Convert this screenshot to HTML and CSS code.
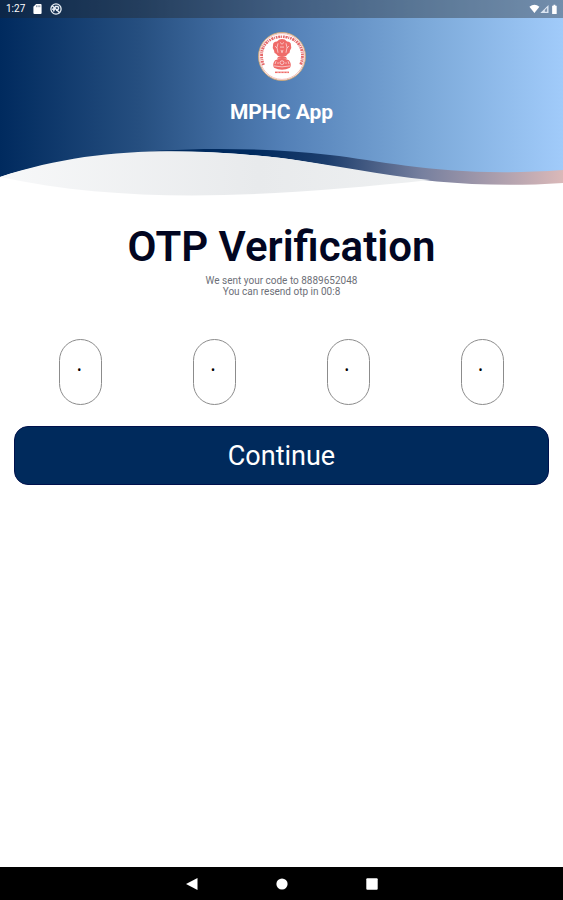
FILE: index.html
```html
<!DOCTYPE html>
<html lang="en">
<head>
<meta charset="utf-8">
<meta name="viewport" content="width=device-width, initial-scale=1">
<title>OTP Verification</title>
<link rel="stylesheet" href="styles.css">
</head>
<body>
<header class="hero">
  <svg class="hero-art" viewBox="0 0 563 200" preserveAspectRatio="none" aria-hidden="true">
    <defs>
      <linearGradient id="sky" x1="0" x2="1" y1="0" y2="0">
        <stop offset="0" stop-color="#002a5e"/>
        <stop offset=".25" stop-color="#264f80"/>
        <stop offset=".5" stop-color="#527fb6"/>
        <stop offset=".75" stop-color="#7ba8d8"/>
        <stop offset="1" stop-color="#a1cbfa"/>
      </linearGradient>
      <linearGradient id="band" gradientUnits="userSpaceOnUse" x1="0" x2="563" y1="0" y2="0">
        <stop offset=".45" stop-color="#002a5e"/>
        <stop offset=".58" stop-color="#1c3d6c"/>
        <stop offset=".75" stop-color="#77809f"/>
        <stop offset="1" stop-color="#dab9b9"/>
      </linearGradient>
      <linearGradient id="mist" x1="0" x2="1" y1="0" y2="0">
        <stop offset="0" stop-color="#f7f8f9"/>
        <stop offset=".6" stop-color="#e8eaec"/>
        <stop offset="1" stop-color="#eef0f1"/>
      </linearGradient>
    </defs>
    <path fill="url(#band)" d="M0 176V130H563V183C430 192 340 165 281 158C180 146 80 151 0 177Z"/>
    <path fill="url(#sky)" d="M0 0H563V170C450 178 390 162 330 155C220 143 100 148 0 176Z"/>
    <path fill="url(#mist)" d="M0 177C90 147 180 147 281 158C335 165 380 175 430 180C270 197 130 205 0 177Z"/>
  </svg>
  <div class="status">
    <span class="clock">1:27</span>
    <svg class="status-icon card" viewBox="0 0 9 11" aria-hidden="true"><path fill="#fff" d="M3 0h5q1 0 1 1v9q0 1-1 1H1q-1 0-1-1V3z"/><path stroke="#42566f" stroke-width=".7" d="M3.500 1.500v2M5.200 1.500v2M7 1.500v2"/></svg>
    <svg class="status-icon round" viewBox="0 0 12 12" fill="none" stroke="#e8eef5" aria-hidden="true"><circle cx="6" cy="6" r="5.100" stroke-width="1.300"/><path stroke-width="1.400" d="M2 2.500l8 7.500M3.500 8.500l2-5h2q2 1 .5 3L6 7.500M3.500 5.200L2.500 7"/></svg>
    <svg class="status-icon signals" viewBox="0 0 31 11" aria-hidden="true"><path fill="#fff" d="M0 3Q5.500-1.500 11 3L5.500 10z"/><path fill="#dce6f2" d="M21 1v9h-9z"/><path fill="#8095b0" d="M17 6.500L19.500 4v4.500H17z"/><path fill="#fff" d="M25 2h1.500V.8h2V2H30v9h-5z"/></svg>
  </div>
  <div class="brand">
    <svg class="seal" viewBox="0 0 48 52" preserveAspectRatio="none" role="img" aria-label="High Court seal">
      <ellipse cx="24" cy="26" rx="23.500" ry="25.500" fill="#fff" stroke="#c9a477"/>
      <ellipse cx="24" cy="26" rx="22.300" ry="24.300" fill="none" stroke="#f0a29c" stroke-width=".7"/>
      <path d="M5.500 35C-1 17 10 5 24 5S49 17 42.500 35" fill="none" stroke="#e5696a" stroke-width="2.800" stroke-dasharray="1.600 .8 2.200 .7 1 .9"/>
      <g fill="#ef6b69">
        <path d="M19 10q2-2.500 5-2.500t5 2.500q4 0 4 4 1 3-1 5.500 0 3-2 3.500l-2 2.500q-4 2-8 0l-2-2.500q-2-.5-2-3.500-2-2.500-1-5.500 0-4 4-4z"/>
        <path d="M20 26.500h8l1 2h-10zM17 30q7-3 14 0 3 4 1 8-8 4-16 0-2-4 1-8z"/>
        <path d="M17 42h14v1.600H17z"/>
      </g>
      <g fill="none" stroke="#fff" stroke-width=".6">
        <path d="M20 12q-2 4 0 10M28 12q2 4 0 10M22 11l2 2 2-2M22 16h4M23 19l1 3 1-3M17 15l2 2M31 15l-2 2M16 36q8 2 16 0M18 31l-1 3M30 31l1 3"/>
        <circle cx="24" cy="32.500" r="2"/><path d="M20 32v2M28 32v2M20 42v2M23 42v2M26 42v2M29 42v2"/>
      </g>
    </svg>
    <p class="app-name">MPHC App</p>
  </div>
</header>
<main class="content">
  <h1 class="title">OTP Verification</h1>
  <p class="hint">We sent your code to 8889652048<br>You can resend otp in 00:8</p>
  <form class="otp-form">
    <div class="digits">
      <input class="digit" type="text" inputmode="numeric" aria-label="Digit 1" value="•">
      <input class="digit" type="text" inputmode="numeric" aria-label="Digit 2" value="•">
      <input class="digit" type="text" inputmode="numeric" aria-label="Digit 3" value="•">
      <input class="digit" type="text" inputmode="numeric" aria-label="Digit 4" value="•">
    </div>
    <button class="continue" type="button">Continue</button>
  </form>
</main>
<nav class="system-nav" aria-label="System">
  <button class="nav-button" type="button" aria-label="Back"><svg viewBox="0 0 12 12"><path d="M11.500 0v12L0 6z"/></svg></button>
  <button class="nav-button" type="button" aria-label="Home"><svg viewBox="0 0 12 12"><circle cx="6" cy="6" r="5.600"/></svg></button>
  <button class="nav-button" type="button" aria-label="Recents"><svg viewBox="0 0 12 12"><rect x=".3" y=".3" width="11.400" height="11.400" rx="1"/></svg></button>
</nav>
</body>
</html>
```
FILE: styles.css
```css
* {
  box-sizing: border-box;
}

body {
  margin: 0;
  min-height: 100vh;
  display: flex;
  flex-direction: column;
  background: #fff;
  font-family: Roboto, "Liberation Sans", sans-serif;
}

p,
h1 {
  margin: 0;
}

.hero {
  position: relative;
  height: 200px;
  color: #fff;
}

.hero-art {
  position: absolute;
  inset: 0;
  width: 100%;
  height: 100%;
}

.status {
  position: relative;
  display: flex;
  align-items: center;
  gap: 8px;
  height: 18px;
  padding: 0 4px 0 6px;
  background: rgb(32 32 32 / 36%);
}

.clock {
  font-size: 10px;
  line-height: 18px;
}

.status-icon {
  display: block;
  height: 10px;
}

.card {
  width: 9px;
}

.round {
  width: 12px;
  height: 12px;
}

.signals {
  width: 31px;
  margin-left: auto;
}

.brand {
  position: relative;
  display: flex;
  flex-direction: column;
  align-items: center;
  gap: 19px;
  padding-top: 14px;
}

.seal {
  display: block;
  width: 48px;
  height: 49px;
}

.app-name {
  font-size: 21px;
  font-weight: 700;
  line-height: 24px;
}

.content {
  flex: 1;
  padding: 21px 14px 0;
  text-align: center;
}

.title {
  color: #020621;
  font-size: 42px;
  font-weight: 600;
  line-height: 52px;
}

.hint {
  margin-top: 2px;
  color: #6d6f78;
  font-size: 10px;
  line-height: 11px;
}

.digits {
  display: flex;
  justify-content: space-around;
  margin-top: 42px;
}

.digit {
  width: 43px;
  height: 66px;
  padding: 0 3px 4px 0;
  border: 1px solid #8c8c8c;
  border-radius: 22px;
  background: #fff;
  color: #000;
  font: 12px Roboto, sans-serif;
  text-align: center;
}

.continue {
  display: block;
  width: 100%;
  height: 59px;
  margin-top: 21px;
  padding: 0;
  border: 1px solid #00114c;
  border-radius: 14px;
  background: #002a5c;
  color: #fff;
  font: 27px Roboto, sans-serif;
}

.system-nav {
  display: flex;
  justify-content: center;
  gap: 66px;
  height: 33px;
  background: #000;
}

.nav-button {
  display: flex;
  align-items: center;
  justify-content: center;
  width: 24px;
  padding: 0;
  border: 0;
  background: none;
}

.nav-button svg {
  width: 12px;
  height: 12px;
  fill: #fff;
}
```
